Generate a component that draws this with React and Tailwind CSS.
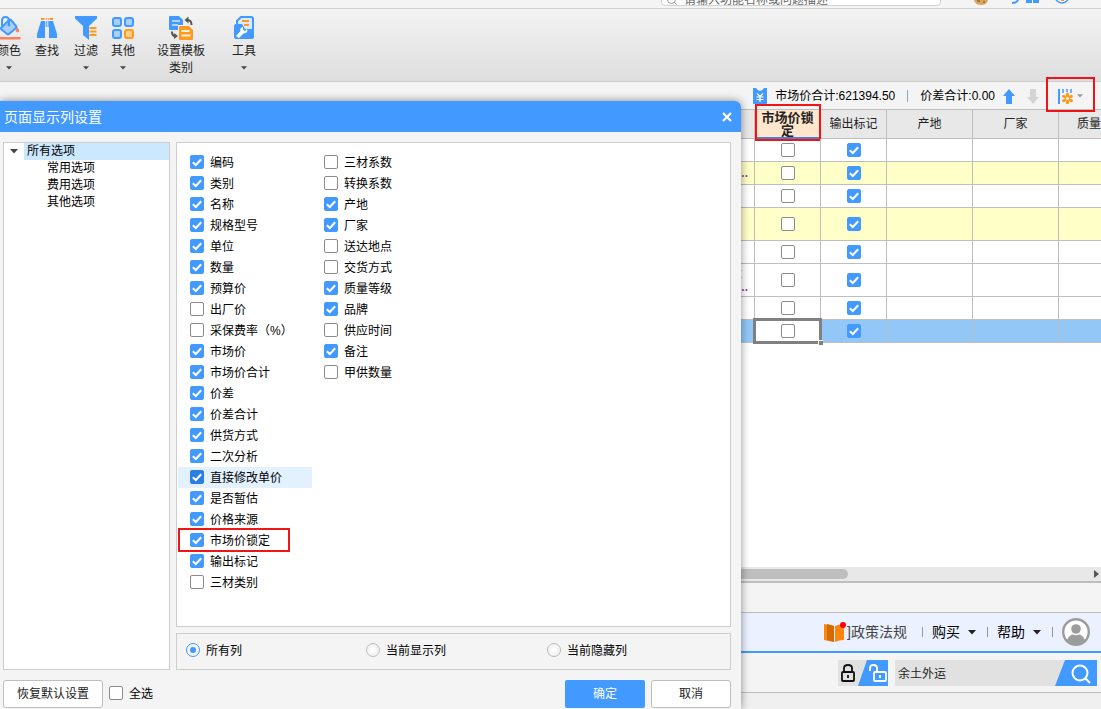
import { useState } from "react";
import { Search } from "lucide-react";

const leftColumns = [
  ["编码", true],
  ["类别", true],
  ["名称", true],
  ["规格型号", true],
  ["单位", true],
  ["数量", true],
  ["预算价", true],
  ["出厂价", false],
  ["采保费率（%）", false],
  ["市场价", true],
  ["市场价合计", true],
  ["价差", true],
  ["价差合计", true],
  ["供货方式", true],
  ["二次分析", true],
  ["直接修改单价", true],
  ["是否暂估", true],
  ["价格来源", true],
  ["市场价锁定", true],
  ["输出标记", true],
  ["三材类别", false],
];

const rightColumns = [
  ["三材系数", false],
  ["转换系数", false],
  ["产地", true],
  ["厂家", true],
  ["送达地点", false],
  ["交货方式", false],
  ["质量等级", true],
  ["品牌", true],
  ["供应时间", false],
  ["备注", true],
  ["甲供数量", false],
];

const rows = [
  { id: 1, size: "h-[23px]", bg: "bg-white" },
  { id: 2, size: "h-[23px]", bg: "bg-[#ffffc8]", note: ".." },
  { id: 3, size: "h-[23px]", bg: "bg-white" },
  { id: 4, size: "h-[33px]", bg: "bg-[#ffffc8]" },
  { id: 5, size: "h-[23px]", bg: "bg-white" },
  { id: 6, size: "h-[33px]", bg: "bg-white", spec: "量", note: ".." },
  { id: 7, size: "h-[23px]", bg: "bg-white" },
  { id: 8, size: "h-[23px]", bg: "bg-[#92c7f7]", selected: true },
];

const Check = ({ defaultChecked, active, ...rest }) => (
  <span className="relative inline-flex w-[14px] h-[14px] shrink-0">
    <input
      type="checkbox"
      defaultChecked={defaultChecked}
      className={`peer appearance-none w-[14px] h-[14px] rounded-[2px] border border-[#8c8c8c] bg-white ${
        active
          ? "checked:bg-[#2b7fe4] checked:border-[#2b7fe4]"
          : "checked:bg-[#4299ff] checked:border-[#4299ff]"
      }`}
      {...rest}
    />
    <svg
      viewBox="0 0 14 14"
      className="absolute inset-0 w-[14px] h-[14px] pointer-events-none hidden peer-checked:block"
    >
      <path d="M2.8 7.2 5.8 10 11.2 4.2" fill="none" stroke="#fff" strokeWidth="2" />
    </svg>
  </span>
);

const Caret = ({ className }) => (
  <svg viewBox="0 0 8 5" className={className}>
    <path d="M0 0h8L4 4.5z" fill="currentColor" />
  </svg>
);

const PaintIcon = () => (
  <svg viewBox="0 0 24 24" className="w-6 h-6">
    <path d="m4 12 8-8q1-1 2 0l5 6q1 1 0 2l-7 6q-1 1-2 0l-6-5q-.5-.5 0-1z" fill="#a9d0ff" stroke="#4299ff" strokeWidth="2" />
    <path d="M5 10V5q0-4 3.500-4T12 5v4" fill="none" stroke="#4299ff" strokeWidth="2" />
    <circle cx="12" cy="9" r="1.500" fill="#4299ff" />
    <path d="M20.500 11.500q3.500 4 0 5-3.500-1 0-5z" fill="#ff7f5c" />
    <path d="M0 21h23.500v2.500H0z" fill="#ff7f5c" />
  </svg>
);

const FindIcon = () => (
  <svg viewBox="0 0 24 24" className="w-6 h-6">
    <path d="M6 5h4v17H2v-4zM14 5h4l4 13v4h-8z" fill="#4299ff" />
    <path d="M10.700 5h1v6h-1zM12.700 5h1v6h-1z" fill="#4299ff" />
    <path d="M6 2h3.500v2H6zM14.500 2H18v2h-3.500zM10.700 2h1v2h-1zM12.700 2h1v2h-1z" fill="#ff9a1e" />
  </svg>
);

const FilterIcon = () => (
  <svg viewBox="0 0 24 24" className="w-6 h-6">
    <path d="M1 0h22v2.500L15 10v14l-6-5v-9L1 2.500z" fill="#4299ff" />
    <path d="M15.500 12h7M15.500 15.500h7M15.500 19h7" stroke="#ff9a1e" strokeWidth="1.800" />
  </svg>
);

const GridIcon = () => (
  <svg viewBox="0 0 24 24" className="w-6 h-6" strokeWidth="2">
    <g fill="#a9d0ff" stroke="#4299ff">
      <rect x="2" y="2" width="8" height="8" rx="2" />
      <rect x="14" y="2" width="8" height="8" rx="2" />
      <rect x="2" y="14" width="8" height="8" rx="2" />
    </g>
    <rect x="14" y="14" width="8" height="8" rx="2" fill="#ffd08a" stroke="#ff9a1e" />
  </svg>
);

const TemplateIcon = () => (
  <svg viewBox="0 0 24 24" className="w-6 h-6">
    <path d="M1 0h9l4 4v5H9v5H1q-1 0-1-1V1q0-1 1-1z" fill="#4299ff" />
    <path d="M3 5h8M3 9h6" stroke="#cfe5ff" strokeWidth="1.500" />
    <path d="M11 10h9l4 4v9q0 1-1 1H11q-1 0-1-1V11q0-1 1-1z" fill="#ff9a1e" />
    <path d="M12.500 15h8M12.500 19.500h9" stroke="#fff3e0" strokeWidth="2" />
    <path d="M22.500 9q0-5-4-5M3 15.500q0 4.500 3 4.500" fill="none" stroke="#555" strokeWidth="2" />
    <path d="m15.500 4 4-3.500v7zM9 20l-4-3v6z" fill="#555" />
  </svg>
);

const ToolIcon = () => (
  <svg viewBox="0 0 24 24" className="w-6 h-6">
    <path d="M5 9V5l4-4h10q2 0 2 2v16" fill="#d9eaff" stroke="#4299ff" strokeWidth="2" />
    <path d="M10 5h7M12 9h5" stroke="#ff9a1e" strokeWidth="2" />
    <path d="M2 10q0-2 2-2h6l3 5h9v8q0 2-2 2H4q-2 0-2-2z" fill="#4299ff" />
    <path d="m4 20 4.500-5q-1-3.500 2.500-4v3l2 1 2-2q1.500 4-3.500 4.500L7 22z" fill="#fff" />
  </svg>
);

const tools = [
  { label: "颜色", icon: PaintIcon, caret: true, width: "w-[38px] -ml-[10px]" },
  { label: "查找", icon: FindIcon, width: "w-[38px]" },
  { label: "过滤", icon: FilterIcon, caret: true, width: "w-[40px]" },
  { label: "其他", icon: GridIcon, caret: true, width: "w-[34px]" },
  { label: "设置模板类别", icon: TemplateIcon, width: "w-[50px] ml-4" },
  { label: "工具", icon: ToolIcon, caret: true, width: "w-[38px] ml-[19px]" },
];

const TopBar = () => (
  <div className="h-[9px] shrink-0 flex justify-end overflow-hidden border-b border-[#d2d2d2] bg-[#f4f4f4]">
    <div className="w-[280px] h-6 -mt-[18px] flex items-center gap-[6px] rounded border border-[#d2d2d2] bg-white px-1 pt-3 text-[#999]">
      <Search className="w-3 h-3 shrink-0" />
      <input
        aria-label="搜索"
        placeholder="请输入功能名称或问题描述"
        className="w-full text-[12px] leading-4 outline-none placeholder:text-[#666]"
      />
    </div>
    <svg viewBox="0 0 160 8" className="w-40 h-2">
      <path d="M33 0q1 5 7 5t7-5z" fill="#d9a75c" />
      <path d="M36 1h3M42 2h2" stroke="#6d4a21" />
      <path d="M77 0q-1 3-6 3" fill="none" stroke="#4299ff" strokeWidth="2" />
      <path d="M85 0h6v3h-6zM92 0h6v3h-6z" fill="#4299ff" />
      <path d="M115 0q6 6 12 0" fill="none" stroke="#4299ff" strokeWidth="1.500" />
      <path d="M120 0h3v1h-3z" fill="#ff9a1e" />
    </svg>
  </div>
);

const Ribbon = () => (
  <div className="h-[73px] shrink-0 flex items-start border-b border-[#cdcdcd] bg-linear-to-b from-[#f3f3f3] to-[#dedede] pt-[7px]">
    {tools.map(({ label, icon: Icon, caret, width }) => (
      <button
        key={label}
        className={`${width} shrink-0 flex flex-col items-center text-[12px] leading-[17px] text-[#222]`}
      >
        <Icon />
        <span className="mt-[3px]">{label}</span>
        {caret && <Caret className="w-[6px] h-1 mt-[6px] text-[#444]" />}
      </button>
    ))}
  </div>
);

const SummaryBar = () => (
  <div className="h-[27px] shrink-0 flex items-center justify-end bg-[#f4f4f4] pt-px text-[12px] text-black">
    <svg viewBox="0 0 14 16" className="w-[14px] h-4 mr-2">
      <path d="M0 0h3q4 6 8 0h3v16H0z" fill="#4299ff" />
      <path d="m4 5.500 3 3 3-3M3.500 9h7M3.500 11.500h7M7 8.500V14" fill="none" stroke="#fff" strokeWidth="1.200" />
    </svg>
    <span>市场价合计:621394.50</span>
    <span className="w-px h-3 mx-3 bg-[#8ba6cf]" />
    <span>价差合计:0.00</span>
    <svg viewBox="0 0 12 15" className="w-3 h-[15px] ml-2 text-[#4299ff]">
      <path d="m6 0 6 7H9v8H3V7H0z" fill="currentColor" />
    </svg>
    <svg viewBox="0 0 12 15" className="w-3 h-[15px] ml-3 text-[#d4d4d4]">
      <path d="M6 15 0 8h3V0h6v8h3z" fill="currentColor" />
    </svg>
    <div className="relative w-[62px] h-[27px] flex items-center pl-[19px]">
      <button aria-label="页面显示列设置" className="flex items-center gap-1">
        <svg viewBox="0 0 15 15" className="w-[15px] h-[15px]">
          <path d="M1 0v15" stroke="#4299ff" strokeWidth="2" />
          <path d="M5 0v4M9 0v3M13 0v4" stroke="#4299ff" strokeWidth="1.500" />
          <path d="M9.500 5v9M5.600 7.200l7.800 4.600M13.400 7.200l-7.800 4.600" stroke="#ff9a1e" strokeWidth="3" strokeLinecap="round" />
          <circle cx="9.500" cy="9.500" r="1.500" fill="#fff" />
        </svg>
        <Caret className="w-[6px] h-1 text-[#999]" />
      </button>
      <span className="absolute left-[7px] -top-[6px] w-[49px] h-[35px] border-2 border-[#f01414]" />
    </div>
  </div>
);

const headCell = "border-r border-b border-[#bebebe] font-normal p-0";
const bodyCell = "border-r border-b border-[#bebebe] p-0";

const MaterialTable = () => (
  <table className="w-full table-fixed border-separate border-spacing-0 border-t border-[#bebebe] text-[12px] leading-[14px] text-[#222]">
    <colgroup>
      <col />
      <col className="w-[66px]" />
      <col className="w-[66px]" />
      <col className="w-[86px]" />
      <col className="w-[86px]" />
      <col className="w-[42px]" />
    </colgroup>
    <thead>
      <tr className="h-[29px] bg-[#e8e8e8]">
        <th className={headCell} />
        <th className="relative border-r border-b-2 border-r-[#bebebe] border-b-[#4a80d8] bg-[#ffe6cc] px-[5px] py-0 font-bold text-[13px] leading-[13px]">
          市场价锁定
          <span className="absolute left-0 -top-[6px] w-[66px] h-[37px] border-2 border-[#f01414]" />
        </th>
        <th className={headCell}>输出标记</th>
        <th className={headCell}>产地</th>
        <th className={headCell}>厂家</th>
        <th className="border-b border-[#bebebe] p-0 pl-[18px] font-normal text-left whitespace-nowrap overflow-hidden">
          质量等级
        </th>
      </tr>
    </thead>
    <tbody>
      {rows.map((row) => (
        <tr key={row.id} className={`${row.size} ${row.bg}`}>
          <td className={`${bodyCell} pr-[6px] text-right font-bold text-[#a13bb5]`}>
            {row.spec && <div className="pr-[6px] font-normal">{row.spec}</div>}
            {row.note}
          </td>
          <td className={`${bodyCell} relative ${row.selected ? "bg-white" : ""}`}>
            <div className="flex justify-center">
              <Check aria-label="市场价锁定" />
            </div>
            {row.selected && (
              <>
                <span className="absolute -left-[2px] -top-[2px] w-[69px] h-[26px] border-3 border-[#808080] pointer-events-none" />
                <span className="absolute left-[63px] top-[20px] w-[5px] h-[5px] border-t border-l border-white bg-[#808080]" />
              </>
            )}
          </td>
          <td className={bodyCell}>
            <div className="flex justify-center">
              <Check aria-label="输出标记" defaultChecked />
            </div>
          </td>
          <td className={bodyCell} />
          <td className={bodyCell} />
          <td className="border-b border-[#bebebe] p-0" />
        </tr>
      ))}
    </tbody>
  </table>
);

const HelpBar = () => (
  <div className="h-[41px] shrink-0 flex items-center justify-end border-t border-b-2 border-t-[#bebebe] border-b-[#4299ff] bg-[#ebf1ff] text-[14px] text-black">
    <a href="#policy" className="flex items-center text-[#444]">
      <svg viewBox="0 0 23 22" className="w-[23px] h-[22px]">
        <path d="m0 3 10 2v16L0 19z" fill="#ff850d" />
        <path d="M10 5 3 3v16l7 2z" fill="#d46a00" />
        <path d="M11 5q4-2 9-1v15q-5 0-9 2z" fill="#ff850d" />
        <circle cx="19" cy="4" r="3" fill="#f00" />
      </svg>
      <span className="w-[60px] overflow-hidden whitespace-nowrap">]政策法规</span>
    </a>
    <span className="w-px h-[10px] mr-[9px] ml-[15px] bg-[#999]" />
    <button className="flex items-center gap-2">
      购买
      <Caret className="w-2 h-[5px] text-[#222]" />
    </button>
    <span className="w-px h-[10px] ml-[11px] mr-[9px] bg-[#999]" />
    <button className="flex items-center gap-2">
      帮助
      <Caret className="w-2 h-[5px] text-[#222]" />
    </button>
    <span className="w-px h-[10px] ml-[11px] mr-[9px] bg-[#999]" />
    <svg viewBox="0 0 28 28" className="w-7 h-7 mr-[11px]">
      <circle cx="14" cy="14" r="12.800" fill="#fff" stroke="#9c9c9c" strokeWidth="2.400" />
      <circle cx="14" cy="11" r="4.800" fill="#9c9c9c" />
      <path d="M5 22q2-5 6-5.500 3 1.500 6 0 4 .5 6 5.500-4 4.500-9 4.500T5 22z" fill="#9c9c9c" />
    </svg>
  </div>
);

const SearchBar = () => (
  <div className="h-[40px] shrink-0 flex items-center justify-end border-b border-[#bebebe] bg-[#f4f4f4]">
    <button aria-label="锁定" className="mr-[7px]">
      <svg viewBox="0 0 50 26" className="w-[50px] h-[26px]" fill="none">
        <path d="M0 0h50v26H0z" fill="#e1e1e1" />
        <path d="M29 0h21v26H20z" fill="#4299ff" />
        <rect x="4" y="12" width="12" height="9" rx="1" stroke="#111" strokeWidth="1.800" />
        <path d="M6 12V8q0-3 4-3t4 3v4M10 15v3" stroke="#111" strokeWidth="1.800" />
        <rect x="36" y="12" width="12" height="9" rx="1" stroke="#fff" strokeWidth="1.800" />
        <path d="M39 12V8q0-3-3.500-3T32 8v3M42 15v3" stroke="#fff" strokeWidth="1.800" />
      </svg>
    </button>
    <input
      aria-label="搜索材料"
      defaultValue="余土外运"
      className="w-[160px] h-[26px] bg-[#e1e1e1] px-[3px] text-[12px] text-[#222] outline-none"
    />
    <button aria-label="查询" className="mr-1">
      <svg viewBox="0 0 42 26" className="w-[42px] h-[26px]" fill="none">
        <path d="M0 0h42v26H0z" fill="#e1e1e1" />
        <path d="M10 0h32v26H0z" fill="#4299ff" />
        <circle cx="25" cy="13" r="7.500" stroke="#fff" strokeWidth="2" />
        <path d="m30.500 18.500 4.500 4.500" stroke="#fff" strokeWidth="2" />
      </svg>
    </button>
  </div>
);

const OptionList = ({ items }) => (
  <ul className="w-[134px]">
    {items.map(([name, checked]) => (
      <li key={name} className="relative">
        <label
          className={`h-[21px] flex items-start gap-[6px] pt-[3px] pl-3 ${
            name === "直接修改单价" ? "bg-[#e3f1ff]" : ""
          }`}
        >
          <Check defaultChecked={checked} active={name === "直接修改单价"} />
          {name}
        </label>
        {name === "市场价锁定" && (
          <span className="absolute left-0 -top-[2px] w-[112px] h-[24px] border-2 border-[#f01414] pointer-events-none" />
        )}
      </li>
    ))}
  </ul>
);

const scopes = ["所有列", "当前显示列", "当前隐藏列"];

const ColumnDialog = () => {
  const [scope, setScope] = useState(scopes[0]);

  return (
    <section
      aria-label="页面显示列设置"
      className="absolute left-0 top-[101px] w-[741px] max-w-full rounded-tr-md bg-[#f4f4f4] shadow-[0_0_8px_rgba(0,0,0,0.45)] text-[12px] leading-[17px] text-black"
    >
      <header className="h-[31px] flex items-center justify-between rounded-tr-md bg-[#4299ff] pl-1 pr-[9px] text-white">
        <h2 className="pt-[2px] text-[14px]">页面显示列设置</h2>
        <button aria-label="关闭">
          <svg viewBox="0 0 10 10" className="w-[10px] h-[10px]">
            <path d="m1 1 8 8M9 1 1 9" stroke="#fff" strokeWidth="2.200" />
          </svg>
        </button>
      </header>

      <div className="flex gap-[6px] pt-[10px] pl-[3px] pr-[10px]">
        <div className="w-[167px] border border-[#cdcdcd] bg-white">
          <div className="flex items-center">
            <Caret className="w-2 h-[5px] mx-[6px] text-[#444]" />
            <span className="flex-1 bg-[#cce8ff] pl-[3px]">所有选项</span>
          </div>
          <ul className="pl-[43px]">
            <li>常用选项</li>
            <li>费用选项</li>
            <li>其他选项</li>
          </ul>
        </div>

        <div className="flex-1 flex flex-col gap-[6px]">
          <div className="h-[485px] flex items-start border border-[#cdcdcd] bg-white pt-[9px] pl-px">
            <OptionList items={leftColumns} />
            <OptionList items={rightColumns} />
          </div>
          <div className="h-[37px] grid grid-cols-[180px_181px_1fr] items-center border border-[#cdcdcd] pl-[9px]">
            {scopes.map((item) => (
              <label key={item} className="flex items-start gap-[6px]">
                <input
                  type="radio"
                  name="scope"
                  checked={scope === item}
                  onChange={() => setScope(item)}
                  className="appearance-none w-[14px] h-[14px] rounded-full border border-[#bcbcbc] bg-white bg-clip-content p-[3px] checked:border-[#4299ff] checked:bg-[#4299ff]"
                />
                {item}
              </label>
            ))}
          </div>
        </div>
      </div>

      <footer className="flex items-center pt-[10px] pl-[3px] pr-[10px] pb-px">
        <button className="w-[100px] h-7 rounded-[3px] border border-[#bebebe] bg-white text-[#222]">
          恢复默认设置
        </button>
        <label className="flex items-start gap-[6px] ml-[6px]">
          <Check />
          全选
        </label>
        <button className="ml-auto w-20 h-7 rounded-[2px] bg-[#4299ff] text-white">确定</button>
        <button className="ml-[6px] w-20 h-7 rounded-[3px] border border-[#bebebe] bg-white text-[#222]">
          取消
        </button>
      </footer>
    </section>
  );
};

const App = () => (
  <div className="relative min-h-screen flex flex-col overflow-hidden bg-[#f0f0f0] font-['Liberation_Sans','Noto_Sans_CJK_SC',sans-serif]">
    <TopBar />
    <Ribbon />
    <SummaryBar />
    <main className="flex-1 bg-white">
      <MaterialTable />
    </main>
    <div className="h-4 shrink-0 flex items-center justify-between border-b-2 border-[#bebebe] bg-[#e8e8e8]">
      <span className="w-[77%] h-[10px] rounded-full bg-[#bebebe]" />
      <svg viewBox="0 0 5 8" className="w-[5px] h-2 mr-[2px]">
        <path d="M0 0v8l5-4z" fill="#555" />
      </svg>
    </div>
    <div className="h-[29px] shrink-0 bg-[#f4f4f4]" />
    <HelpBar />
    <SearchBar />
    <div className="h-4 shrink-0" />
    <ColumnDialog />
  </div>
);

export default App;
